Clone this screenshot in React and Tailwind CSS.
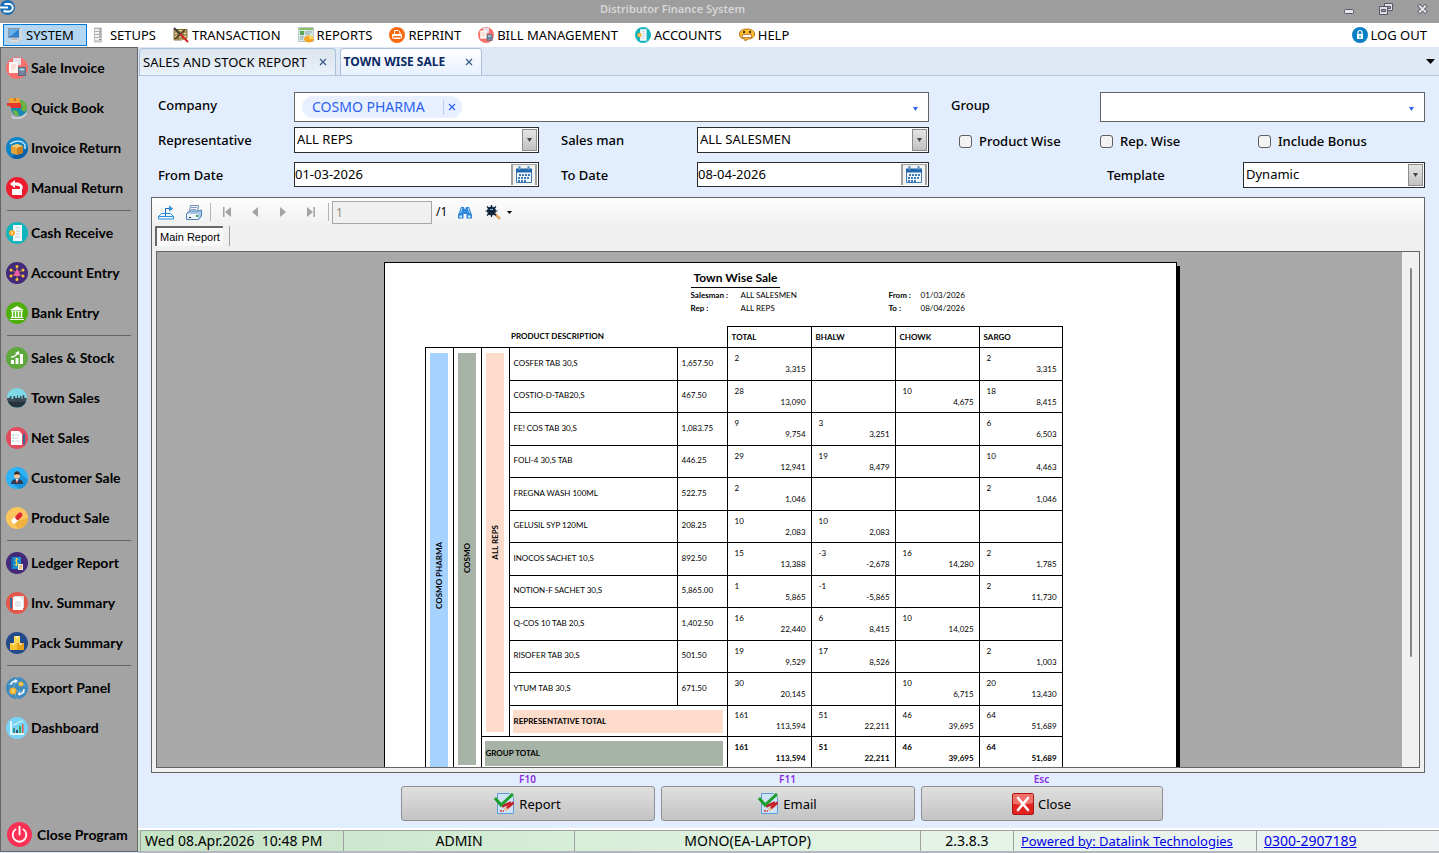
// src/App.jsx
import { useState } from 'react';

/* ---------- icons ---------- */

const Disc = ({ color, size = 22, children }) => (
  <svg width={size} height={size} viewBox="0 0 22 22" className="shrink-0" aria-hidden="true">
    <circle cx="11" cy="11" r="11" fill={color} />
    {children}
  </svg>
);

const InvoiceIcon = ({ size }) => (
  <Disc color="#f9716d" size={size}>
    <path d="M7 1h8v7H7z" fill="#dfe0ec" />
    <path d="M3 5h9v11H3z" fill="#fff7f2" />
    <path d="M5 8h5M5 10h5M5 12h4" stroke="#f4c9c0" />
    <path d="M12 10h8v9h-8z" fill="#5d6c86" />
    <path d="M13.500 11.500h5v2h-5z" fill="#a8e0ea" />
    <path d="M13.500 15h5M13.500 17h5" stroke="#c8cede" strokeDasharray="1 1" />
  </Disc>
);

const QuickBookIcon = () => (
  <svg width="22" height="22" viewBox="0 0 22 22" className="shrink-0" aria-hidden="true">
    <path d="M5 18c5 4 12 3 15-3l1 2c-3 5-11 7-15 4z" fill="#c9d1d6" />
    <circle cx="13" cy="11" r="8" fill="#1688b4" />
    <path d="M15 3c4 1 6 5 6 9l-3 3-3-3 1-3-3-2zM7 13l4 1 2 4-2 1c-2-1-4-3-4-6z" fill="#6fb43f" />
    <path d="M3 1h11v7H3z" fill="#f2a43a" />
    <path d="M8 1h2v3H8z" fill="#c97716" />
    <path d="M1 6h14v5H5l-1-2H1z" fill="#e2382d" />
  </svg>
);

const InvoiceReturnIcon = () => (
  <Disc color="#0b84c8">
    <path d="M22 11a11 11 0 0 1-17 9z" fill="#0a5fa8" />
    <path d="M4 7c5-4 12-4 15 1v4" stroke="#d8f1ff" strokeWidth="1.300" fill="none" />
    <path d="M5 9l6-2 6 2v7l-6 2-6-2z" fill="#e9a13b" />
    <path d="M5 9l6 2 6-2-6-2z" fill="#f7c872" />
    <path d="M11 11v7l6-2V9z" fill="#c97f22" />
  </Disc>
);

const ManualReturnIcon = () => (
  <Disc color="#ee1c2e">
    <path d="M6 11h10v7H6z" fill="#fff" />
    <path d="M4 7l5-4v2.500c5-.5 8 2 8 6h-2.500c0-2-2-3-5.500-3V11z" fill="#fff" />
    <path d="M6 11.500h8" stroke="#ee1c2e" />
  </Disc>
);

const CashIcon = ({ size }) => (
  <Disc color="#0fb5bd" size={size}>
    <path d="M7 3h9v16H7z" fill="#f4f8fb" />
    <path d="M10 6h4M10 9h4M10 12h4M9 15h5" stroke="#b7cdd8" />
    <circle cx="6" cy="11" r="3" fill="#f4a92d" />
    <path d="M6 9.500v3" stroke="#fff3c4" />
  </Disc>
);

const AccountEntryIcon = () => (
  <Disc color="#43297a">
    <path d="M11 5v12M5 8l12 6M17 8L5 14" stroke="#c58a3b" strokeWidth=".8" />
    <g fill="#f7c433">
      <circle cx="11" cy="4.500" r="1.500" />
      <circle cx="5" cy="8" r="1.500" />
      <circle cx="17" cy="8" r="1.500" />
      <circle cx="5" cy="14" r="1.500" />
      <circle cx="17" cy="14" r="1.500" />
      <circle cx="11" cy="17.500" r="1.500" />
    </g>
    <path d="M11 7l2 3 1 4H8l1-4z" fill="#ef5fa7" />
  </Disc>
);

const BankIcon = () => (
  <Disc color="#4caf0a">
    <path d="M11 4l7 4H4z" fill="#fff" />
    <path d="M5 9h12M5 15.500h12M4 17.500h14" stroke="#fff" strokeWidth="1.200" />
    <path d="M6.500 9v6M9.500 9v6M12.500 9v6M15.500 9v6" stroke="#fff" strokeWidth="1.500" />
  </Disc>
);

const StockIcon = () => (
  <Disc color="#5fa83c">
    <path d="M5 13h3v4H5zM9.500 11h3v6h-3zM14 7h3v10h-3z" fill="#fff" />
    <path d="M5 10c3 0 5-1 6.500-4" stroke="#fff" strokeWidth="1.500" fill="none" />
    <path d="M9 6l4-2 .5 4z" fill="#fff" />
  </Disc>
);

const TownIcon = () => (
  <svg width="22" height="22" viewBox="-1 -1 24 24" className="shrink-0" aria-hidden="true">
    <circle cx="11" cy="11" r="11" fill="#7ed9e6" />
    <path d="M.2 11H3V9h2v3h2V9h2v2h2V8h1v3h2V9h2v3h1V8h2v3h2.800a11 11 0 0 1-21.600 2z" fill="#3b4a55" />
    <path d="M1 15h20a11 11 0 0 1-20 0z" fill="#27333c" />
  </svg>
);

const NetSalesIcon = () => (
  <Disc color="#e04c5e">
    <path d="M5 4h8l3 3v11H5z" fill="#fff" />
    <path d="M9 8h4M9 11h4M9 14h4" stroke="#d0d5dc" />
    <path d="M6.500 8h1.500M6.500 11h1.500M6.500 14h1.500" stroke="#3fb7a4" />
    <path d="M17 7h2v9l-1 2-1-2z" fill="#2c6f9b" />
  </Disc>
);

const CustomerIcon = () => (
  <Disc color="#2cb2f7">
    <path d="M14 6l8 7a11 11 0 0 1-9 9l-7-6z" fill="#1b93d8" />
    <path d="M5 17c0-3 2-5 6-5s6 2 6 5z" fill="#2d3e50" />
    <path d="M9.500 12l1.500 4 1.500-4z" fill="#fff" />
    <path d="M11 12.500l.7 3-.7 1-.7-1z" fill="#d8332e" />
    <circle cx="11" cy="8.500" r="3" fill="#f6c79b" />
    <path d="M8 8c0-5 6-5 6 0-2-1-4-1-6 0z" fill="#3a2a22" />
  </Disc>
);

const PillIcon = () => (
  <Disc color="#fdc65a">
    <path d="M8 15L22 11a11 11 0 0 1-10 11z" fill="#eeb142" />
    <path d="M8 14l6-6" stroke="#fff" strokeWidth="5" strokeLinecap="round" />
    <path d="M11.500 10.500L14 8" stroke="#e1262c" strokeWidth="5" strokeLinecap="round" />
    <path d="M8 14l2-2" stroke="#fff" strokeWidth="5" />
  </Disc>
);

const LedgerIcon = () => (
  <Disc color="#43297a">
    <path d="M5 5h10v12H5z" fill="#1c8fd6" />
    <path d="M5 5h2v12H5z" fill="#1468ad" />
    <path d="M12.500 7.500c-3-1.500-4 1.500-2 2.500s2 3.500-2 2.500M10.500 6v8" stroke="#f5d33e" fill="none" />
    <path d="M12 12h5v6h-5z" fill="#f5e9c6" />
    <path d="M13 14h3M13 16h3" stroke="#c99a5a" />
  </Disc>
);

const InvSummaryIcon = () => (
  <Disc color="#e4584a">
    <path d="M8 4h10v12H8z" fill="#d9dee2" />
    <path d="M7 5h7l3 3v10H7z" fill="#fff" />
    <path d="M9 10h6M9 12h6M9 14h6" stroke="#cfd5da" />
    <path d="M4 6h2v9l-1 2-1-2z" fill="#2d6f9e" />
  </Disc>
);

const PackIcon = () => (
  <Disc color="#234a8b">
    <path d="M8 4h6v7H8z" fill="#ffd95c" />
    <path d="M4 11h7v7H4z" fill="#f8c437" />
    <path d="M11 11h7v7h-7z" fill="#e6a51c" />
    <path d="M10 4h2v2h-2zM6.500 11h2v2h-2zM13.500 11h2v2h-2z" fill="#fff2b8" />
  </Disc>
);

const ExportIcon = () => (
  <Disc color="#3e8bbf">
    <path d="M2 8c4-3 13-3 18 1M3 16c5-3 11-3 16 0M11 0c-4 5-4 16 0 22" stroke="#70b0d8" fill="none" />
    <circle cx="7" cy="14" r="3.500" fill="#f3b52f" />
    <circle cx="15" cy="7" r="2.500" fill="#f3b52f" />
    <path d="M7 12v4M15 6v2" stroke="#fff0b0" />
    <path d="M5 8c0-3 2-4 5-4M18 12c0 3-2 5-5 5" stroke="#fff" strokeWidth="1.500" fill="none" />
    <path d="M9 2l3 2-3 2zM14 14.500L11.500 17l2.500 2z" fill="#fff" />
  </Disc>
);

const DashboardIcon = () => (
  <Disc color="#78d3f8">
    <path d="M5 4v13h13" stroke="#fff" strokeWidth="1.500" fill="none" />
    <path d="M7 11h2v5H7z" fill="#3d8f8a" />
    <path d="M10 13h2v3h-2z" fill="#28527a" />
    <path d="M13 9h2v7h-2z" fill="#3da35d" />
    <path d="M16 7h1.500v9H16z" fill="#e25c4a" />
    <path d="M7 8l3-1 3-2 4-1" stroke="#eef8fc" fill="none" />
  </Disc>
);

const PowerIcon = () => (
  <Disc color="#fb3055" size={25}>
    <path d="M7.500 6.500a6 6 0 1 0 7 0" stroke="#fff" strokeWidth="1.600" fill="none" strokeLinecap="round" />
    <path d="M11 4v7" stroke="#fff" strokeWidth="1.600" strokeLinecap="round" />
  </Disc>
);

const MonitorIcon = () => (
  <svg width="16" height="16" viewBox="0 0 16 16" className="shrink-0" aria-hidden="true">
    <path d="M1 1h12v10H1z" fill="#8b98a3" />
    <path d="M2 2h10v8H2z" fill="#2f7fd0" />
    <path d="M2 2h10L4 9H2z" fill="#69aee8" />
    <path d="M12 2h3v11h-3z" fill="#d3d6d8" />
    <path d="M5 11h5v2H5z" fill="#b9bec2" />
    <path d="M3 13h9l1 2H2z" fill="#e8eaeb" stroke="#b4b8bb" strokeWidth=".5" />
  </svg>
);

const ServerIcon = () => (
  <svg width="16" height="16" viewBox="0 0 16 16" className="shrink-0" aria-hidden="true">
    <path d="M3.500 1h7v14h-7z" fill="#f1f1f1" stroke="#c4c4c4" />
    <path d="M3 1.500h8M3 4.500h8M3 7.500h8M3 10.500h8M3 14h8" stroke="#b0b0b0" />
    <path d="M8 3h2M8 6h2M8 9h2M8 12.500h2" stroke="#7d7d7d" />
  </svg>
);

const TransactionIcon = () => (
  <svg width="16" height="16" viewBox="0 0 16 16" className="shrink-0" aria-hidden="true">
    <path d="M1 2h13v11H1z" fill="#e2cc8f" />
    <path d="M1 2.500h13M1 5h13M1 8h13M1 11h13M1 13h8M1 2v11M5 2v11M10 2v11M14 2v9" stroke="#6b5423" strokeWidth=".8" />
    <path d="M2 12L12 3" stroke="#4a3a1c" strokeWidth="1.500" />
    <path d="M7 7l8 8" stroke="#d6242c" strokeWidth="2.200" />
    <path d="M1 1l6 6" stroke="#3d3a36" strokeWidth="2" />
  </svg>
);

const ReportsIcon = () => (
  <svg width="16" height="16" viewBox="0 0 16 16" className="shrink-0" aria-hidden="true">
    <path d="M.5.500h15v14H.5z" fill="#d5e6e4" stroke="#b9c9c6" />
    <path d="M1 1h14v2H1z" fill="#8cc06a" />
    <path d="M2 4h4v4H2z" fill="#5aa650" />
    <path d="M7 5h7M7 7h5M2 10h4M2 12h3" stroke="#8fa5a8" />
    <ellipse cx="11" cy="12" rx="5" ry="3.500" fill="#f5a623" />
    <path d="M11 12V8.500A5 3.500 0 0 1 16 12z" fill="#ffd85a" />
  </svg>
);

const ReprintIcon = () => (
  <svg width="16" height="16" viewBox="0 0 16 16" className="shrink-0" aria-hidden="true">
    <circle cx="8" cy="8" r="8" fill="#f9690e" />
    <path d="M5.500 7V3.500h4L11 5v2M3.500 11V7.500h9V11zM5 11.500h6" stroke="#fff" fill="none" />
    <path d="M4 8h8v1H4z" fill="#fff" />
  </svg>
);

const HelpIcon = () => (
  <svg width="16" height="16" viewBox="0 0 16 16" className="shrink-0" aria-hidden="true">
    <path d="M8 2c5 0 7.500 2 7.500 5S13 12 9 12l-3 2v-2C2.500 12 .5 10 .5 7S3 2 8 2z" fill="#fbc02d" stroke="#b8771a" />
    <circle cx="5" cy="5" r="1.200" fill="#4b2e0a" />
    <circle cx="11" cy="5" r="1.200" fill="#4b2e0a" />
    <path d="M3.500 7.500h9v3h-9z" fill="#fff" stroke="#a64b1c" strokeWidth=".6" />
  </svg>
);

const LockIcon = () => (
  <svg width="16" height="16" viewBox="0 0 16 16" className="shrink-0" aria-hidden="true">
    <circle cx="8" cy="8" r="8" fill="#0a80c4" />
    <path d="M5 7h6v5H5z" fill="#fff" />
    <path d="M6 7V5.500a2 2 0 0 1 4 0V7" stroke="#fff" strokeWidth="1.200" fill="none" />
    <path d="M8 8.500v2" stroke="#0a80c4" strokeWidth="1.200" />
  </svg>
);

const AppLogo = () => (
  <svg width="16" height="16" viewBox="0 0 16 16" className="shrink-0" aria-hidden="true">
    <circle cx="7.500" cy="7.500" r="7.500" fill="#1b6fb8" />
    <path d="M4.500 4H9a3.500 3.500 0 0 1 0 7.500H4.500V10" stroke="#fff" strokeWidth="1.800" fill="none" />
    <path d="M0 7.500h8" stroke="#fff" strokeWidth="2" />
  </svg>
);

const CalendarIcon = () => (
  <svg width="18" height="18" viewBox="0 0 18 18" aria-hidden="true">
    <path d="M1.500 3.500h15v13h-15z" fill="#f5f9fd" stroke="#3b79b7" />
    <path d="M1 2.500h16v4H1z" fill="#2367ab" />
    <path d="M4.500 0v4M13.500 0v4" stroke="#5e93c6" strokeWidth="2" />
    <path d="M4 9h11M3 12h12M3 15h8" stroke="#3b79b7" strokeWidth="2" strokeDasharray="2 1" />
  </svg>
);

const ReportCheckIcon = () => (
  <svg width="21" height="21" viewBox="0 0 21 21" aria-hidden="true">
    <path d="M3.500.500h12l4 4v16h-16z" fill="#cfe4fa" stroke="#5a9be0" />
    <path d="M6 18h2M9 18h1" stroke="#d22" strokeWidth="1.500" />
    <path d="M11 17l7-6" stroke="#e9b48a" strokeWidth="3" />
    <path d="M13 15l6.500-5.500M8 13.500l9-4" stroke="#c4202a" strokeWidth="2.500" />
    <path d="M1 5l6 7L19 1" stroke="#1e9e2b" strokeWidth="3" fill="none" />
  </svg>
);

const CloseBoxIcon = () => (
  <svg width="22" height="22" viewBox="0 0 22 22" aria-hidden="true">
    <rect x=".5" y=".5" width="21" height="21" rx="1.500" fill="#e2231f" stroke="#a81715" />
    <path d="M1 1h20v9c-7 2-13 2-20 1z" fill="#f0706a" />
    <path d="M6 5l10 12M16 5L6 17" stroke="#fff" strokeWidth="2.600" strokeLinecap="round" />
  </svg>
);

const Caret = ({ className }) => (
  <svg width="5" height="4" viewBox="0 0 5 4" className={className} aria-hidden="true">
    <path d="M0 0h5L2.500 4z" fill="currentColor" />
  </svg>
);

const XMark = () => (
  <svg width="8" height="8" viewBox="0 0 8 8" aria-hidden="true">
    <path d="M1 1l6 6M7 1L1 7" stroke="currentColor" strokeWidth="1.200" />
  </svg>
);

/* ---------- data ---------- */

const MENU = [
  { label: 'SYSTEM', icon: <MonitorIcon />, active: true },
  { label: 'SETUPS', icon: <ServerIcon /> },
  { label: 'TRANSACTION', icon: <TransactionIcon /> },
  { label: 'REPORTS', icon: <ReportsIcon /> },
  { label: 'REPRINT', icon: <ReprintIcon /> },
  { label: 'BILL MANAGEMENT', icon: <InvoiceIcon size={16} /> },
  { label: 'ACCOUNTS', icon: <CashIcon size={16} /> },
  { label: 'HELP', icon: <HelpIcon /> },
];

const SIDEBAR = [
  [
    ['Sale Invoice', <InvoiceIcon />],
    ['Quick Book', <QuickBookIcon />],
    ['Invoice Return', <InvoiceReturnIcon />],
    ['Manual Return', <ManualReturnIcon />],
  ],
  [
    ['Cash Receive', <CashIcon />],
    ['Account Entry', <AccountEntryIcon />],
    ['Bank Entry', <BankIcon />],
  ],
  [
    ['Sales & Stock', <StockIcon />],
    ['Town Sales', <TownIcon />],
    ['Net Sales', <NetSalesIcon />],
    ['Customer Sale', <CustomerIcon />],
    ['Product Sale', <PillIcon />],
  ],
  [
    ['Ledger Report', <LedgerIcon />],
    ['Inv. Summary', <InvSummaryIcon />],
    ['Pack Summary', <PackIcon />],
  ],
  [
    ['Export Panel', <ExportIcon />],
    ['Dashboard', <DashboardIcon />],
  ],
];

const TOWNS = ['TOTAL', 'BHALW', 'CHOWK', 'SARGO'];

// [name, rate, [qty, amount] per town]
const PRODUCTS = [
  ['COSFER TAB 30,S', '1,657.50', [['2', '3,315'], null, null, ['2', '3,315']]],
  ['COSTIO-D-TAB20,S', '467.50', [['28', '13,090'], null, ['10', '4,675'], ['18', '8,415']]],
  ['FE! COS TAB 30,S', '1,083.75', [['9', '9,754'], ['3', '3,251'], null, ['6', '6,503']]],
  ['FOLI-4 30,S TAB', '446.25', [['29', '12,941'], ['19', '8,479'], null, ['10', '4,463']]],
  ['FREGNA WASH 100ML', '522.75', [['2', '1,046'], null, null, ['2', '1,046']]],
  ['GELUSIL SYP 120ML', '208.25', [['10', '2,083'], ['10', '2,083'], null, null]],
  ['INOCOS SACHET 10,S', '892.50', [['15', '13,388'], ['-3', '-2,678'], ['16', '14,280'], ['2', '1,785']]],
  ['NOTION-F SACHET 30,S', '5,865.00', [['1', '5,865'], ['-1', '-5,865'], null, ['2', '11,730']]],
  ['Q-COS 10 TAB 20,S', '1,402.50', [['16', '22,440'], ['6', '8,415'], ['10', '14,025'], null]],
  ['RISOFER TAB 30,S', '501.50', [['19', '9,529'], ['17', '8,526'], null, ['2', '1,003']]],
  ['YTUM TAB 30,S', '671.50', [['30', '20,145'], null, ['10', '6,715'], ['20', '13,430']]],
];

const TOTALS = [['161', '113,594'], ['51', '22,211'], ['46', '39,695'], ['64', '51,689']];

/* ---------- small pieces ---------- */

const FieldLabel = ({ htmlFor, className = '', children }) => (
  <label htmlFor={htmlFor} className={`flex h-[26px] items-center font-medium ${className}`}>
    {children}
  </label>
);

const SelectBox = ({ id, value }) => (
  <div className="relative h-[26px]">
    <select
      id={id}
      defaultValue={value}
      className="h-full w-full appearance-none border border-[#2b2b2b] bg-white px-0.5 pb-0.5 outline-none"
    >
      <option>{value}</option>
    </select>
    <span className="pointer-events-none absolute inset-y-0.5 right-0.5 flex w-[15px] items-center justify-center border border-[#8c8c8c] bg-linear-to-b from-[#e4e4e4] to-[#c2c2c2] text-[#444]">
      <Caret />
    </span>
  </div>
);

const DateBox = ({ id, value }) => (
  <div className="flex h-[25px] items-center border border-[#2b2b2b] bg-white pr-px">
    <input id={id} defaultValue={value} className="h-full w-full min-w-0 flex-1 pb-0.5 outline-none" />
    <button
      aria-label="Pick a date"
      className="flex h-[21px] w-[26px] items-center justify-center border-x-2 border-t border-[#a0a0a0] bg-[#f2f2f2]"
    >
      <CalendarIcon />
    </button>
  </div>
);

const CheckBox = ({ id, label }) => (
  <div className="flex h-7 items-center gap-[7px]">
    <input
      id={id}
      type="checkbox"
      className="h-[13px] w-[13px] appearance-none rounded-[3px] border border-[#5f5f5f] bg-[#f3f3f3] checked:bg-[#0067c0]"
    />
    <label htmlFor={id} className="font-medium">{label}</label>
  </div>
);

const TownCell = ({ cell, bold }) => (
  <td className={`border border-black pr-[5px] pl-[7px] ${bold ? 'font-bold' : ''}`}>
    {cell && (
      <>
        <div>{cell[0]}</div>
        <div className="text-right">{cell[1]}</div>
      </>
    )}
  </td>
);

const StripCell = ({ rowSpan, className, children }) => (
  <td rowSpan={rowSpan} className={`border border-black bg-clip-content p-[5px] font-bold ${className}`}>
    <div className="flex justify-center">
      <span className="rotate-180 whitespace-nowrap [writing-mode:vertical-rl]">{children}</span>
    </div>
  </td>
);

const ToolButton = ({ label, children }) => (
  <button aria-label={label} className="flex w-7 items-center justify-center text-[#a3a3a3]">
    {children}
  </button>
);

/* ---------- page parts ---------- */

const TitleBar = () => (
  <header className="flex h-[23px] shrink-0 items-start bg-[#9d9d9d]">
    <AppLogo />
    <h1 className="flex-1 text-center text-[11px] leading-[18px] font-semibold text-[#d6d6d6]">
      Distributor Finance System
    </h1>
    <div className="flex h-[17px] w-[110px] items-center justify-end gap-6 pr-[11px]">
      <button aria-label="Minimize">
        <svg width="12" height="12" viewBox="0 0 12 12">
          <rect x="1.500" y="6.500" width="9" height="4" rx="1" fill="#e8e8e8" stroke="#55566b" />
        </svg>
      </button>
      <button aria-label="Restore">
        <svg width="14" height="12" viewBox="0 0 14 12">
          <path d="M5.500.5h8v7h-8z" fill="#e0e0e0" stroke="#55566b" />
          <path d="M7.500 3.500h4v2h-4z" fill="#9d9d9d" stroke="#55566b" />
          <path d="M.5 3.500h8v8h-8z" fill="#e0e0e0" stroke="#55566b" />
          <path d="M2.500 6.500h4v2h-4z" fill="#9d9d9d" stroke="#55566b" />
        </svg>
      </button>
      <button aria-label="Close window">
        <svg width="11" height="10" viewBox="0 0 11 10">
          <path d="M1.500 1l8 8M9.500 1l-8 8" stroke="#55566b" strokeWidth="3.500" />
          <path d="M2 1.500l7 7M9 1.500l-7 7" stroke="#e8e8e8" strokeWidth="1.800" />
        </svg>
      </button>
    </div>
  </header>
);

const MenuBar = () => (
  <nav className="flex h-6 shrink-0 items-center bg-white pr-2 pl-[3px]">
    {MENU.map((item) => (
      <button
        key={item.label}
        className={`flex h-[22px] items-center gap-[3px] border pr-3 pl-[3px] whitespace-nowrap ${
          item.active ? 'border-[#0078d7] bg-[#b3d7f3]' : 'border-transparent'
        }`}
      >
        {item.icon}
        {item.label}
      </button>
    ))}
    <button className="ml-auto flex items-center gap-[3px] pr-1 whitespace-nowrap">
      <LockIcon />
      LOG OUT
    </button>
  </nav>
);

const Sidebar = () => (
  <aside className="mb-px flex w-[138px] shrink-0 flex-col border border-[#646464] bg-[#a3a3a3] font-['Lato',sans-serif] text-[14px] font-bold">
    {SIDEBAR.map((group, i) => (
      <div key={i}>
        {i > 0 && (
          <div className="mx-1.5 flex h-[5px] items-center">
            <hr className="w-full border-[#646464]" />
          </div>
        )}
        {group.map(([label, icon]) => (
          <button key={label} className="flex h-10 w-full items-center gap-[3px] pl-[5px] whitespace-nowrap">
            {icon}
            {label}
          </button>
        ))}
      </div>
    ))}
    <button className="mt-auto mb-1 flex items-center gap-[5px] pl-1.5 whitespace-nowrap">
      <PowerIcon />
      Close Program
    </button>
  </aside>
);

const TabStrip = () => (
  <div className="flex h-[29px] shrink-0 items-stretch border-b border-[#b3c6de] bg-[#dfe9f5] pt-px pl-px">
    <div className="mr-1 flex items-center gap-3 rounded-t-sm border border-b-0 border-[#a9bfdc] bg-linear-to-b from-[#dce4ec] to-[#e9f1fa] pr-2 pl-[3px]">
      <button className="whitespace-nowrap">SALES AND STOCK REPORT</button>
      <button aria-label="Close SALES AND STOCK REPORT" className="text-[#3b5a85]">
        <XMark />
      </button>
    </div>
    <div className="flex items-center gap-5 rounded-t-sm border border-b-0 border-[#a9bfdc] bg-linear-to-b from-white to-[#e6f0ff] pr-2 pl-[3px]">
      <button className="text-[12px] font-bold whitespace-nowrap text-[#0b2a66]">TOWN WISE SALE</button>
      <button aria-label="Close TOWN WISE SALE" className="text-[#3b5a85]">
        <XMark />
      </button>
    </div>
    <button aria-label="Open tabs" className="mr-1 ml-auto">
      <svg width="9" height="5" viewBox="0 0 9 5"><path d="M0 0h9L4.500 5z" /></svg>
    </button>
  </div>
);

const Filters = () => {
  const [companies, setCompanies] = useState(['COSMO PHARMA']);

  return (
    <form
      className="grid auto-rows-[30px] grid-cols-[136px_minmax(0,245fr)_158px_minmax(0,232fr)_171px_minmax(0,325fr)] gap-y-[5px] pt-4 pr-3.5 pl-5"
      onSubmit={(e) => e.preventDefault()}
    >
      <FieldLabel htmlFor="company">Company</FieldLabel>
      <div className="col-span-3 flex items-center border border-[#646464] bg-white pr-2.5 pl-[7px]">
        {companies.map((name) => (
          <span key={name} className="flex h-[22px] items-center rounded-full bg-[#e8f0ff] pr-1.5 pl-2.5 text-[14px] text-[#2b63f0]">
            {name}
            <button
              type="button"
              aria-label={`Remove ${name}`}
              className="ml-[18px] flex h-[15px] items-center border-l border-[#b9cdf8] pl-1"
              onClick={() => setCompanies(companies.filter((c) => c !== name))}
            >
              <XMark />
            </button>
          </span>
        ))}
        <input id="company" className="min-w-0 flex-1 outline-none" />
        <Caret className="mt-1 text-[#2b63f0]" />
      </div>
      <FieldLabel htmlFor="group" className="pl-[22px]">Group</FieldLabel>
      <div className="flex items-center border border-[#646464] bg-white pr-2.5">
        <input id="group" className="h-full min-w-0 flex-1 px-1 outline-none" />
        <Caret className="mt-1 text-[#2b63f0]" />
      </div>

      <FieldLabel htmlFor="rep">Representative</FieldLabel>
      <SelectBox id="rep" value="ALL REPS" />
      <FieldLabel htmlFor="salesman" className="pl-[22px]">Sales man</FieldLabel>
      <SelectBox id="salesman" value="ALL SALESMEN" />
      <div className="pl-[30px]">
        <CheckBox id="product-wise" label="Product Wise" />
      </div>
      <div className="grid grid-cols-[158fr_167fr]">
        <CheckBox id="rep-wise" label="Rep. Wise" />
        <CheckBox id="include-bonus" label="Include Bonus" />
      </div>

      <FieldLabel htmlFor="from-date">From Date</FieldLabel>
      <DateBox id="from-date" value="01-03-2026" />
      <FieldLabel htmlFor="to-date" className="pl-[22px]">To Date</FieldLabel>
      <DateBox id="to-date" value="08-04-2026" />
      <div className="col-start-6 grid grid-cols-[143fr_182fr]">
        <FieldLabel htmlFor="template" className="pl-[7px]">Template</FieldLabel>
        <SelectBox id="template" value="Dynamic" />
      </div>
    </form>
  );
};

const ViewerToolbar = () => (
  <div className="flex h-7 shrink-0 items-center bg-linear-to-b from-[#fdfdfd] to-[#f0f0f0]">
    <ToolButton label="Export report">
      <svg width="16" height="15" viewBox="0 0 16 15">
        <path d="M3.500 8.500h9l3 3v2.500H.5v-2.500z" fill="#eef7ff" stroke="#2b8fdc" />
        <path d="M.5 11.500h15" stroke="#2b8fdc" />
        <path d="M7.500 11V3.500H12" stroke="#1a6cb8" fill="none" />
        <path d="M11 .5l4 3-4 3z" fill="#2b8fdc" />
      </svg>
    </ToolButton>
    <ToolButton label="Print report">
      <svg width="16" height="15" viewBox="0 0 16 15">
        <path d="M4.500.5h8l-1 6h-8z" fill="#f4f9ff" stroke="#6f8cae" />
        <path d="M5 2.500h6M5 4.500h5" stroke="#7d9cc0" />
        <path d="M.5 8.500l3-2.500h9l3-1v6l-3 3.500H.5z" fill="#a9c8e6" stroke="#4d83ba" />
        <path d="M1 9h11v5H1z" fill="#eef4fa" />
        <path d="M3 12.500h2" stroke="#222" />
        <path d="M10 10h2v2h-2z" fill="#2fae4a" />
      </svg>
    </ToolButton>
    <span className="mx-0.5 h-[18px] w-px bg-[#b4b4b4]" />
    <ToolButton label="First page">
      <svg width="8" height="10" viewBox="0 0 8 10"><path d="M0 0h1.500v10H0zM8 0v10L2 5z" fill="currentColor" /></svg>
    </ToolButton>
    <ToolButton label="Previous page">
      <svg width="6" height="10" viewBox="0 0 6 10"><path d="M6 0v10L0 5z" fill="currentColor" /></svg>
    </ToolButton>
    <ToolButton label="Next page">
      <svg width="6" height="10" viewBox="0 0 6 10"><path d="M0 0v10l6-5z" fill="currentColor" /></svg>
    </ToolButton>
    <ToolButton label="Last page">
      <svg width="8" height="10" viewBox="0 0 8 10"><path d="M6.500 0H8v10H6.500zM0 0v10l6-5z" fill="currentColor" /></svg>
    </ToolButton>
    <span className="mx-[3px] h-[18px] w-px bg-[#b4b4b4]" />
    <input
      aria-label="Page number"
      defaultValue="1"
      className="h-[23px] w-[100px] border border-[#a6a6a6] bg-[#f0f0f0] px-[3px] text-[12px] text-[#8f8f7a] outline-none"
    />
    <span className="ml-1 text-[12px]">/1</span>
    <span className="w-1" />
    <ToolButton label="Find text">
      <svg width="14" height="13" viewBox="0 0 14 13">
        <path d="M3 1h3l1 3 1-3h3l3 8v3.500H8.500V8h-3v4.500H0V9z" fill="#2d86d9" />
        <path d="M1.500 9.500h2.500v2H1.500zM10 9.500h2.500v2H10z" fill="#d9efff" />
        <path d="M4 2L2.500 7M10 2l1.500 5" stroke="#a8d6fa" />
      </svg>
    </ToolButton>
    <ToolButton label="Zoom">
      <svg width="16" height="15" viewBox="0 0 16 15">
        <path d="M10 9l5 5" stroke="#e0a565" strokeWidth="2.500" />
        <circle cx="6.500" cy="6" r="4.500" fill="#173a5e" />
        <path d="M6.500 0v12M.5 6h12M2 1.500l9 9M11 1.500l-9 9" stroke="#0d1b2a" strokeWidth="1.200" />
        <path d="M5 4.500h3" stroke="#7fc4f5" />
      </svg>
    </ToolButton>
    <svg width="5" height="3" viewBox="0 0 5 3"><path d="M0 0h5L2.500 3z" /></svg>
  </div>
);

const ReportPage = () => (
  <div className="mx-auto mt-2.5 w-[796px] shrink-0 bg-[linear-gradient(black,black)] bg-[length:3px_100%] bg-[position:right_4px] bg-no-repeat pr-[3px] font-['Lato',sans-serif] text-[8px] leading-[11px]">
    <div className="h-[1100px] border border-black bg-white pl-10">
      <div className="ml-[266px] pt-1.5">
        <h2 className="inline-block border-b border-black px-[3px] text-[12px] leading-[18px] font-bold">
          Town Wise Sale
        </h2>
        <dl className="mt-px grid grid-cols-[50px_148px_32px_80px] leading-[13px]">
          <dt className="font-bold">Salesman :</dt>
          <dd>ALL SALESMEN</dd>
          <dt className="font-bold">From :</dt>
          <dd>01/03/2026</dd>
          <dt className="font-bold">Rep :</dt>
          <dd>ALL REPS</dd>
          <dt className="font-bold">To :</dt>
          <dd>08/04/2026</dd>
        </dl>
      </div>
      <table className="mt-[11px] w-[637px] table-fixed border-collapse">
        <colgroup>
          <col className="w-7" />
          <col className="w-7" />
          <col className="w-7" />
          <col className="w-[168px]" />
          <col className="w-[50px]" />
          <col className="w-[84px]" />
          <col className="w-[84px]" />
          <col className="w-[84px]" />
          <col className="w-[83px]" />
        </colgroup>
        <thead>
          <tr className="h-[21px] text-left">
            <th colSpan={5} className="border-r border-b border-black pl-[86px]">PRODUCT DESCRIPTION</th>
            {TOWNS.map((town) => (
              <th key={town} className="border border-black pl-1">{town}</th>
            ))}
          </tr>
        </thead>
        <tbody>
          {PRODUCTS.map(([name, rate, cells], i) => (
            <tr key={name} className="odd:h-[33px] even:h-[32px]">
              {i === 0 && (
                <>
                  <StripCell rowSpan={14} className="bg-[#a6d2ff]">COSMO PHARMA</StripCell>
                  <StripCell rowSpan={13} className="bg-[#a6b3a6]">COSMO</StripCell>
                  <StripCell rowSpan={12} className="bg-[#fddccc]">ALL REPS</StripCell>
                </>
              )}
              <td className="border border-black pb-0.5 pl-1">{name}</td>
              <td className="border border-black pb-0.5 pl-1">{rate}</td>
              {cells.map((cell, j) => (
                <TownCell key={j} cell={cell} />
              ))}
            </tr>
          ))}
          <tr className="h-[31px]">
            <td colSpan={2} className="border border-black bg-[#fddccc] bg-clip-content p-1 font-bold">
              REPRESENTATIVE TOTAL
            </td>
            {TOTALS.map((cell, j) => (
              <TownCell key={j} cell={cell} />
            ))}
          </tr>
          <tr className="h-[33px]">
            <td colSpan={3} className="border border-black bg-[#a6b3a6] bg-clip-content p-1 font-bold">
              GROUP TOTAL
            </td>
            {TOTALS.map((cell, j) => (
              <TownCell key={j} cell={cell} bold />
            ))}
          </tr>
          <tr className="h-[33px]">
            <td colSpan={8} className="border border-black" />
          </tr>
        </tbody>
      </table>
    </div>
  </div>
);

const ReportViewer = () => (
  <section className="mt-[5px] mr-3.5 ml-[13px] flex min-h-0 flex-1 flex-col border border-[#646464] bg-[#f0f0f0]">
    <ViewerToolbar />
    <div className="flex h-[25px] shrink-0 items-start pl-[3px] font-['Liberation_Sans',sans-serif] text-[11px]">
      <button className="h-5 border-t-2 border-l-2 border-[#696969] bg-[#fafafa] px-[3px] whitespace-nowrap">
        Main Report
      </button>
      <span className="ml-1.5 h-5 w-px bg-[#a0a0a0]" />
    </div>
    <div className="mx-1 mb-1 flex min-h-0 flex-1 border border-[#646464] bg-[#a9a9a9]">
      <div className="flex min-w-0 flex-1 overflow-hidden pl-1">
        <ReportPage />
      </div>
      <div className="flex w-[17px] justify-center bg-[#f0f0f0] pt-4">
        <div className="h-[78%] w-0.5 rounded-full bg-[#858585]" />
      </div>
    </div>
  </section>
);

const ActionButton = ({ hint, icon, label, className }) => (
  <div className={`flex flex-col items-center ${className}`}>
    <kbd className="font-[inherit] text-[10px] leading-3 font-semibold text-[#8a2be2]">{hint}</kbd>
    <button className="mt-px flex h-[35px] w-full items-center justify-center gap-1 rounded-[3px] border border-[#8f8f8f] bg-linear-to-b from-[#e0e0e0] to-[#c3c3c3]">
      {icon}
      {label}
    </button>
  </div>
);

const StatusBar = () => (
  <footer className="flex h-[25px] shrink-0 border-t-2 border-b-2 border-t-white border-b-[#b4b6c0] bg-linear-to-r from-[#c4e2c4] via-[#e0f3e2] to-[#f0f3f3] pl-0.5 text-[14px]">
    <div className="flex w-[203px] items-center border-t border-l border-[#a0a0a0] pl-1 whitespace-pre">
      {'Wed 08.Apr.2026  10:48 PM'}
    </div>
    <div className="flex flex-[231] items-center justify-center border-t border-l border-[#a0a0a0]">ADMIN</div>
    <div className="flex flex-[346] items-center justify-center border-t border-l border-[#a0a0a0]">
      MONO(EA-LAPTOP)
    </div>
    <div className="flex w-[93px] items-center justify-center border-t border-l border-[#a0a0a0]">2.3.8.3</div>
    <div className="flex w-[243px] items-center border-t border-l border-[#a0a0a0] pl-[7px] text-[13px] whitespace-nowrap">
      <a href="#datalink" className="text-[#0000e8] underline">Powered by: Datalink Technologies</a>
    </div>
    <div className="flex w-[183px] items-center border-t border-l border-[#a0a0a0] pl-[7px]">
      <a href="tel:03002907189" className="text-[#0000e8] underline">0300-2907189</a>
    </div>
  </footer>
);

const App = () => (
  <div className="flex h-screen flex-col overflow-hidden bg-[#e2edfe] font-['Noto_Sans','Open_Sans',sans-serif] text-[13px] leading-4 text-black">
    <TitleBar />
    <MenuBar />
    <div className="flex min-h-0 flex-1">
      <Sidebar />
      <main className="flex min-w-0 flex-1 flex-col">
        <TabStrip />
        <Filters />
        <ReportViewer />
        <div className="flex shrink-0 justify-center gap-1.5 pr-3.5 pb-[7px]">
          <ActionButton hint="F10" icon={<ReportCheckIcon />} label="Report" className="w-[254px]" />
          <ActionButton hint="F11" icon={<ReportCheckIcon />} label="Email" className="w-[254px]" />
          <ActionButton hint="Esc" icon={<CloseBoxIcon />} label="Close" className="w-[242px]" />
        </div>
        <StatusBar />
      </main>
    </div>
  </div>
);

export default App;
